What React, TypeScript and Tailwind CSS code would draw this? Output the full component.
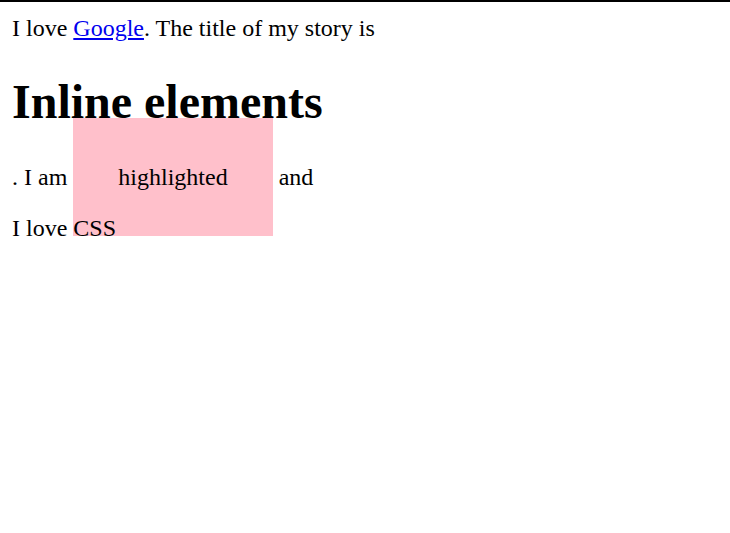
export default function App() {
  return (
    <div className="min-h-[533px] w-full bg-white border-t-2 border-black font-['Liberation_Serif',serif] text-[24px] leading-[normal] text-black">
      <div className="px-3 pt-[13px]">
        <div>
          I love <a href="#" className="text-[#0000ee] underline">Google</a>. The title of my story is
        </div>
        <h1 className="mt-[32px] mb-[35px] text-[48px] font-bold leading-[normal]">Inline elements</h1>
        <div>
          . I am <span className="bg-[#ffc0cb] px-[45px] py-[46px]">highlighted</span> and
        </div>
        <p className="mt-6">I love CSS</p>
      </div>
    </div>
  );
}
